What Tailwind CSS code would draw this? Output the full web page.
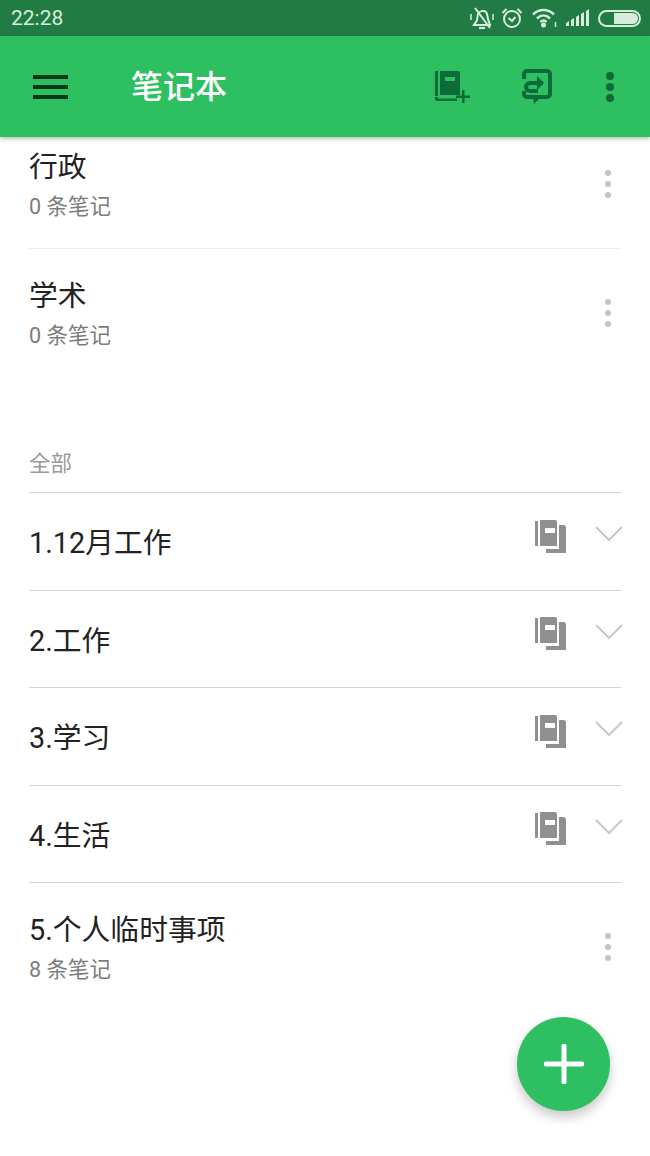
<!DOCTYPE html>
<html>
<head>
<meta charset="utf-8">
<title>笔记本</title>
<script src="https://cdn.jsdelivr.net/npm/@tailwindcss/browser@4"></script>
</head>
<body class="bg-white font-['Roboto','Noto_Sans_CJK_SC',sans-serif]">
<div class="relative w-[650px] h-[1156px] overflow-hidden bg-white">

  <!-- status bar -->
  <div class="h-[36px] bg-[#217c43] flex items-center pl-[11px] pr-[9px] text-[#d6ecdc]">
    <span class="text-[21px] leading-none">22:28</span>
    <div class="ml-auto flex items-center">
      <svg width="24" height="24" viewBox="0 0 24 24" fill="none" stroke="#d6ecdc" stroke-width="2" class="mr-[7px]">
        <path d="M6 16c2-2 1-5 2-8 1-3 6-4 8-2 2 2 1 6 3 10l1 3H4z"/><path d="M9 22h6" /><path d="M5 2l15 20"/><path d="M1 8v6M23 8v6" stroke-width="1.500"/>
      </svg>
      <svg width="22" height="22" viewBox="0 0 22 22" fill="none" stroke="#d6ecdc" stroke-width="2" class="mr-[9px]">
        <circle cx="11" cy="12" r="8"/><path d="M7.500 11l3.500 3 3.500-4" /><path d="M1.500 6l4-4M20.500 6l-4-4"/>
      </svg>
      <svg width="25" height="20" viewBox="0 0 25 20" fill="none" stroke="#d6ecdc" stroke-width="2.500" class="mr-[9px]">
        <path d="M1 6.500c6-6 15-6 21 0"/><path d="M5 10.500c4-4 9-4 13 0"/><path d="M8.500 14c2-2 4-2 6 0"/>
        <circle cx="11.500" cy="17" r="2.500" fill="#d6ecdc" stroke="none"/><path d="M23.500 14v5" stroke-width="1.500"/>
      </svg>
      <svg width="24" height="18" viewBox="0 0 24 18" fill="#d6ecdc" class="mr-[8px]">
        <path d="M0 14l3-2v5H0zM5 11l3-2v8H5zM10 8l3-2v11h-3zM15 5l3-2v14h-3zM20 2l3-2v17h-3z"/>
      </svg>
      <div class="w-[43px] h-[17px] rounded-full border-2 border-[#d6ecdc] flex justify-end p-[1px]">
        <div class="w-[24px] h-full bg-[#d6ecdc] rounded-r-full"></div>
      </div>
    </div>
  </div>

  <!-- app bar -->
  <div class="relative z-10 h-[101px] bg-[#2ebf60] flex items-center shadow-[0_2px_4px_rgba(0,0,0,0.25)]">
    <div class="ml-[33px] w-[35px] flex flex-col gap-[6px]">
      <div class="h-[4px] bg-[#06371a]"></div>
      <div class="h-[4px] bg-[#06371a]"></div>
      <div class="h-[4px] bg-[#06371a]"></div>
    </div>
    <h1 class="ml-[63px] text-white text-[32px] font-medium leading-none">笔记本</h1>
    <svg width="36" height="32" viewBox="0 0 36 32" class="ml-[207px]" fill="#0b6b39">
      <path d="M1 0h3v25H1zM6 0h18a2 2 0 0 1 2 2v22H6z"/>
      <rect x="11" y="6" width="10" height="4" fill="#2ebf60"/>
      <path d="M1 26h3v1.500h19V30H3a2 2 0 0 1-2-2z"/>
      <path d="M28 19h2.500v5.500H36V27h-5.500v5H28v-5h-6v-2.500h6z"/>
    </svg>
    <svg width="30" height="35" viewBox="0 0 30 35" class="ml-[52px]" fill="none" stroke="#0b6b39" stroke-width="4">
      <path d="M2 10V5a3 3 0 0 1 3-3h20a3 3 0 0 1 3 3v20a3 3 0 0 1-3 3H5a3 3 0 0 1-3-3v-3"/>
      <path d="M21 14H8a4 4 0 0 0 0 8h8"/>
      <path d="M15 7l7 7-7 7" fill="#0b6b39" stroke="none"/>
      <path d="M11 28h8l-7 7z" fill="#0b6b39" stroke="none"/>
    </svg>
    <div class="ml-[54px] flex flex-col gap-[3px]">
      <div class="w-[8px] h-[8px] rounded-full bg-[#0b6b39]"></div>
      <div class="w-[8px] h-[8px] rounded-full bg-[#0b6b39]"></div>
      <div class="w-[8px] h-[8px] rounded-full bg-[#0b6b39]"></div>
    </div>
  </div>

  <!-- list -->
  <main class="mx-[29px]">
    <div class="h-[112px] border-b border-[#eeeeee] flex items-start relative">
      <div class="mt-[1px]">
        <div class="text-[28.800px] leading-[58px] h-[58px] text-[#222222]">行政</div>
        <div class="text-[21.500px] leading-[24px] -mt-[1px] text-[#7d7d7d]">0 条笔记</div>
      </div>
      <div class="ml-auto mr-[10px] mt-[33px] flex flex-col gap-[5px]">
        <div class="w-[6px] h-[6px] rounded-full bg-[#c4c4c4]"></div>
        <div class="w-[6px] h-[6px] rounded-full bg-[#c4c4c4]"></div>
        <div class="w-[6px] h-[6px] rounded-full bg-[#c4c4c4]"></div>
      </div>
    </div>
    <div class="h-[128px] flex items-start">
      <div class="mt-[18px]">
        <div class="text-[28.800px] leading-[58px] h-[58px] text-[#222222]">学术</div>
        <div class="text-[21.500px] leading-[24px] -mt-[1px] text-[#7d7d7d]">0 条笔记</div>
      </div>
      <div class="ml-auto mr-[10px] mt-[50px] flex flex-col gap-[5px]">
        <div class="w-[6px] h-[6px] rounded-full bg-[#c4c4c4]"></div>
        <div class="w-[6px] h-[6px] rounded-full bg-[#c4c4c4]"></div>
        <div class="w-[6px] h-[6px] rounded-full bg-[#c4c4c4]"></div>
      </div>
    </div>
    <div class="h-[116px] flex items-end pb-[16px] border-b border-[#d4d4d4] text-[21.500px] leading-[24px] text-[#9a9a9a]">全部</div>

    <div id="groups"></div>

    <div class="h-[128px] flex items-start">
      <div class="mt-[18px]">
        <div class="text-[28.800px] leading-[58px] h-[58px] text-[#222222]">5.个人临时事项</div>
        <div class="text-[21.500px] leading-[24px] -mt-[1px] text-[#7d7d7d]">8 条笔记</div>
      </div>
      <div class="ml-auto mr-[10px] mt-[50px] flex flex-col gap-[5px]">
        <div class="w-[6px] h-[6px] rounded-full bg-[#c4c4c4]"></div>
        <div class="w-[6px] h-[6px] rounded-full bg-[#c4c4c4]"></div>
        <div class="w-[6px] h-[6px] rounded-full bg-[#c4c4c4]"></div>
      </div>
    </div>
  </main>

  <!-- fab -->
  <div class="absolute left-[517px] top-[1017px] w-[93px] h-[94px] rounded-full bg-[#2ebf60] flex items-center justify-center shadow-[0_6px_12px_rgba(0,0,0,0.22)]">
    <svg width="40" height="40" viewBox="0 0 40 40" stroke="#fff" stroke-width="5" stroke-linecap="round"><path d="M20 2v36M2 20h36"/></svg>
  </div>
</div>

<script>
  const groups = ['1.12月工作', '2.工作', '3.学习', '4.生活'];
  const row = document.getElementById('groups');
  groups.forEach((name) => {
    const el = document.createElement('div');
    el.className = 'h-[97.500px] border-b border-[#d4d4d4] flex items-center';
    el.innerHTML = `
      <span class="text-[28.800px] leading-none text-[#222222] mt-[5px]">${name}</span>
      <svg width="32" height="34" viewBox="0 0 32 34" fill="#8f8f8f" class="ml-auto mb-[9px]">
        <path d="M0 1h3v25H0zM5 0h15a2 2 0 0 1 2 2v24H5z"/>
        <rect x="10" y="8" width="10" height="5" fill="#fff"/>
        <path d="M24 5h4a3 3 0 0 1 3 3v25H11v-4h13z" />
      </svg>
      <svg width="28" height="16" viewBox="0 0 28 16" fill="none" stroke="#c8c8c8" stroke-width="2" class="ml-[28px] -mr-[2px] mb-[14px]"><path d="M1 1l13 13L27 1"/></svg>`;
    row.appendChild(el);
  });
</script>
</body>
</html>
